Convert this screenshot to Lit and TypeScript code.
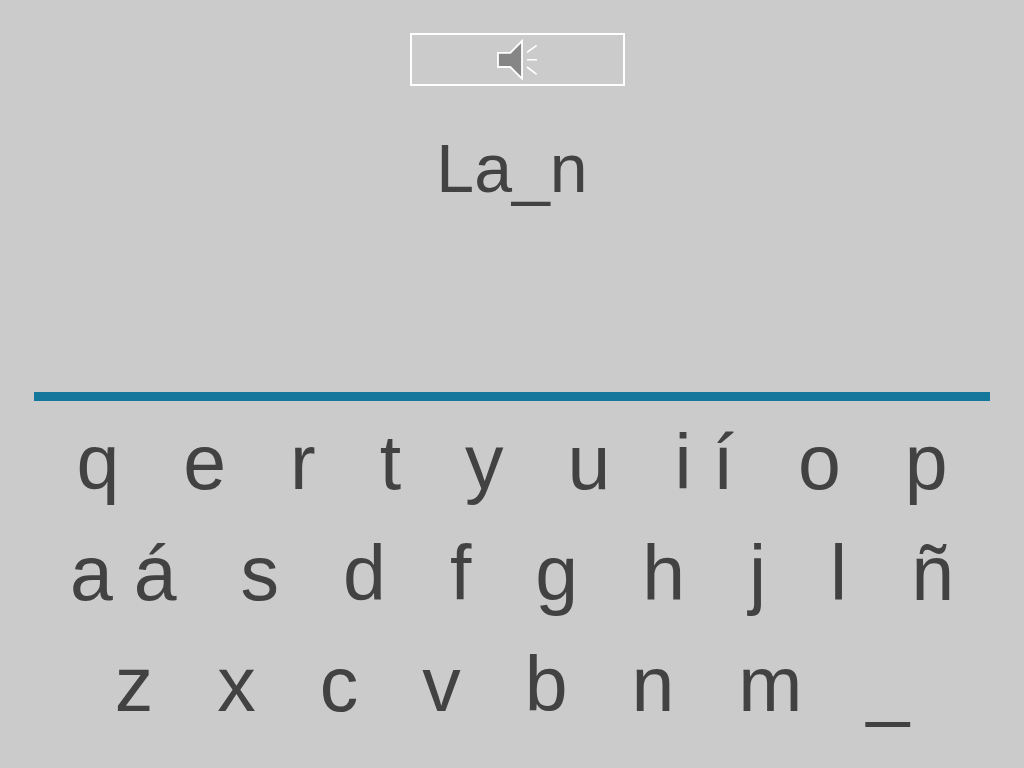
import { LitElement, html, css } from "lit";
import { customElement } from "lit/decorators.js";

// Each row lists its keys; keys in the same group sit one space apart.
const ROWS: string[][][] = [
  [["q"], ["e"], ["r"], ["t"], ["y"], ["u"], ["i", "í"], ["o"], ["p"]],
  [["a", "á"], ["s"], ["d"], ["f"], ["g"], ["h"], ["j"], ["l"], ["ñ"]],
  [["z"], ["x"], ["c"], ["v"], ["b"], ["n"], ["m"], ["_"]],
];

@customElement("app-root")
export class AppRoot extends LitElement {
  static styles = css`
    :host {
      display: flex;
      flex-direction: column;
      box-sizing: border-box;
      min-height: 100vh;
      padding: 33px 0 28px;
      background: #cbcbcb;
      color: #424242;
      font-family: "Liberation Sans", Arial, Helvetica, sans-serif;
    }
    .prompt {
      flex: 1;
    }
    .listen {
      display: flex;
      align-items: center;
      justify-content: center;
      box-sizing: border-box;
      width: 21%;
      height: 53px;
      margin-left: 40%;
      padding: 0;
      border: 2px solid #fff;
      background: transparent;
      cursor: pointer;
    }
    .speaker {
      display: block;
      width: 44px;
      height: 44px;
    }
    .word {
      margin: 42px 0 0;
      font-size: 68px;
      line-height: 80px;
      font-weight: 400;
      text-align: center;
    }
    .rule {
      height: 9px;
      margin: 0 34px 6px;
      border: 0;
      background: #15779b;
    }
    .row {
      display: flex;
      justify-content: center;
      gap: 64px;
    }
    .group {
      display: flex;
      gap: 21px;
    }
    .key {
      padding: 0;
      border: 0;
      background: transparent;
      color: inherit;
      font-family: inherit;
      font-size: 77px;
      line-height: 111px;
      cursor: pointer;
    }
  `;

  render() {
    return html`
      <section class="prompt">
        <button class="listen" type="button" aria-label="Escuchar">
          <svg class="speaker" viewBox="0 0 44 44" fill="none" stroke="#fff" aria-hidden="true">
            <path d="M3 14.8H15.3L27 3V40.6L15.3 29H3Z" fill="#868686" stroke-width="1.8" />
            <path d="M32 14.3L41.7 7.3M32 21.7H42M32 29L41.7 36.4" stroke-width="1.6" />
          </svg>
        </button>
        <h1 class="word">La_n</h1>
      </section>
      <hr class="rule" />
      <section>
        ${ROWS.map(
          (row) => html`<div class="row">
            ${row.map(
              (group) => html`<div class="group">
                ${group.map((key) => html`<button class="key" type="button">${key}</button>`)}
              </div>`
            )}
          </div>`
        )}
      </section>
    `;
  }
}
